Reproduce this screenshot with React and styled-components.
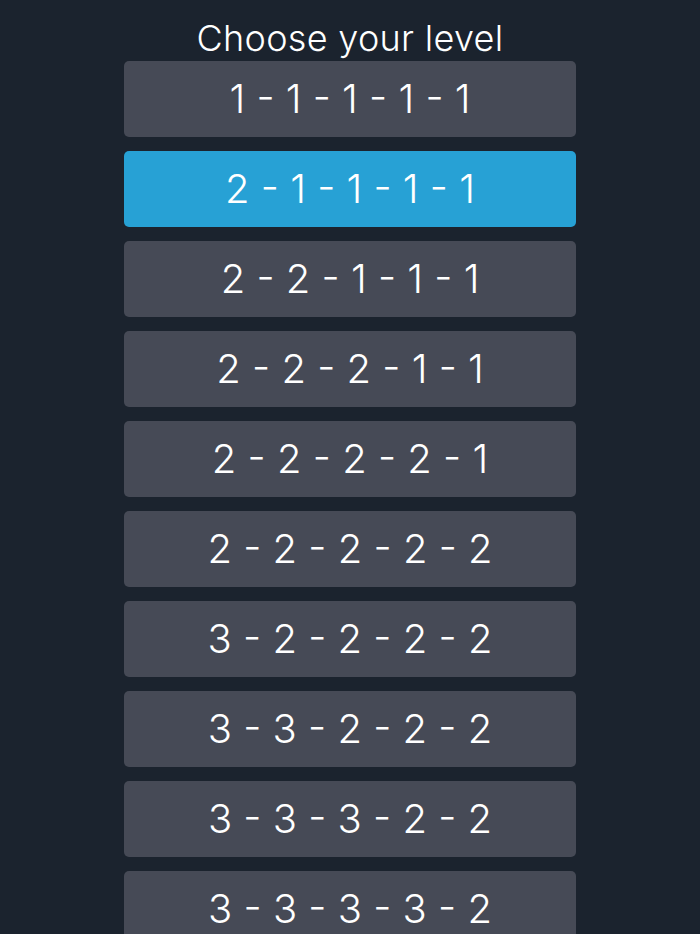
import React, { useState } from 'react';
import styled, { createGlobalStyle } from 'styled-components';

const GlobalStyle = createGlobalStyle`
  html, body {
    margin: 0;
    padding: 0;
    background: #1b232e;
  }

  body {
    font-family: Inter, "Noto Sans", sans-serif;
    color: #ffffff;
  }
`;

const Container = styled.main`
  display: flex;
  flex-direction: column;
  align-items: center;
  padding-top: 15px;
`;

const Title = styled.h1`
  margin: 0;
  font-size: 36px;
  font-weight: 300;
  line-height: 46px;
  letter-spacing: 0.3px;
`;

const LevelList = styled.ul`
  list-style: none;
  margin: 0;
  padding: 0;
  display: flex;
  flex-direction: column;
  gap: 14px;
  width: 452px;
`;

const LevelButton = styled.button`
  display: flex;
  width: 100%;
  height: 76px;
  align-items: center;
  justify-content: center;
  padding: 0 0 2px;
  border: none;
  border-radius: 5px;
  background: ${({ $active }) => ($active ? '#27a1d5' : '#464a56')};
  color: #ffffff;
  font-family: inherit;
  font-size: 40px;
  font-weight: 300;
  cursor: pointer;
`;

const levels = [
  [1, 1, 1, 1, 1],
  [2, 1, 1, 1, 1],
  [2, 2, 1, 1, 1],
  [2, 2, 2, 1, 1],
  [2, 2, 2, 2, 1],
  [2, 2, 2, 2, 2],
  [3, 2, 2, 2, 2],
  [3, 3, 2, 2, 2],
  [3, 3, 3, 2, 2],
  [3, 3, 3, 3, 2],
  [3, 3, 3, 3, 3]
];

const App = () => {
  const [selected, setSelected] = useState(1);

  return (
    <Container>
      <GlobalStyle />
      <Title>Choose your level</Title>
      <LevelList>
        {levels.map((level, i) => (
          <li key={level.join('')}>
            <LevelButton $active={i === selected} onClick={() => setSelected(i)}>
              {level.join(' - ')}
            </LevelButton>
          </li>
        ))}
      </LevelList>
    </Container>
  );
};

export default App;
